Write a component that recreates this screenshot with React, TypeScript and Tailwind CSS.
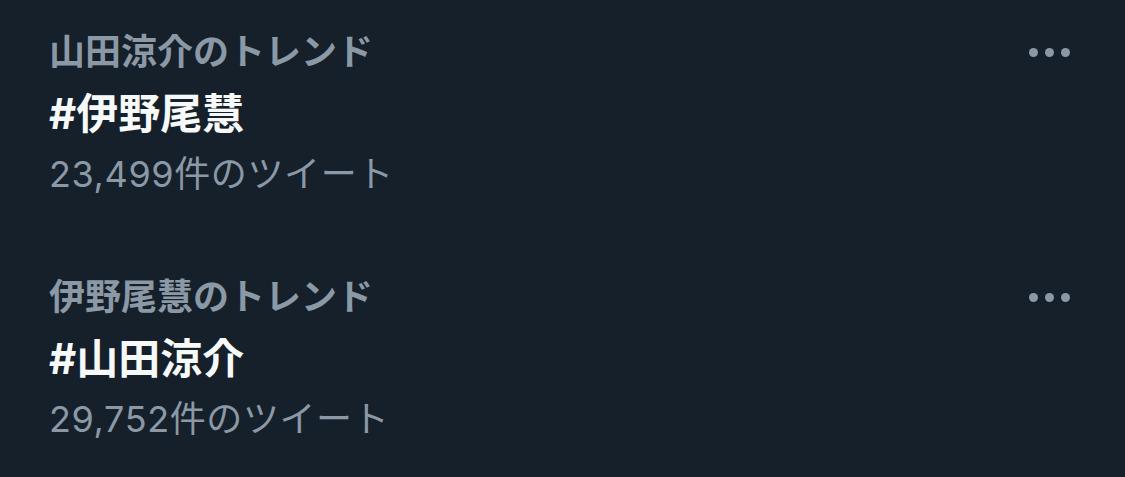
const trends = [
  { context: '山田涼介のトレンド', name: '#伊野尾慧', count: '23,499件のツイート' },
  { context: '伊野尾慧のトレンド', name: '#山田涼介', count: '29,752件のツイート' },
];

function MoreDots() {
  return (
    <div className="flex items-center gap-[7px] pt-[18px]">
      <span className="block h-[9px] w-[9px] rounded-full bg-[#8b98a5]" />
      <span className="block h-[9px] w-[9px] rounded-full bg-[#8b98a5]" />
      <span className="block h-[9px] w-[9px] rounded-full bg-[#8b98a5]" />
    </div>
  );
}

export default function App() {
  return (
    <div
      className="flex h-[477px] w-full flex-col gap-[79px] bg-[#15202b] pl-[49px] pr-[55px] pt-[30px]"
      style={{ fontFamily: 'Inter, "Noto Sans CJK JP", "Noto Sans", sans-serif' }}
    >
      {trends.map((t) => (
        <div key={t.name} className="flex items-start justify-between">
          <div className="flex flex-col">
            <div className="text-[36px] font-semibold leading-[44px] text-[#8b98a5]">{t.context}</div>
            <div className="mt-[12px] text-[42px] font-bold leading-[56px] text-[#f7f9f9]">{t.name}</div>
            <div className="mt-[10px] text-[36px] tracking-[0.6px] leading-[44px] text-[#8b98a5]">{t.count}</div>
          </div>
          <MoreDots />
        </div>
      ))}
    </div>
  );
}
